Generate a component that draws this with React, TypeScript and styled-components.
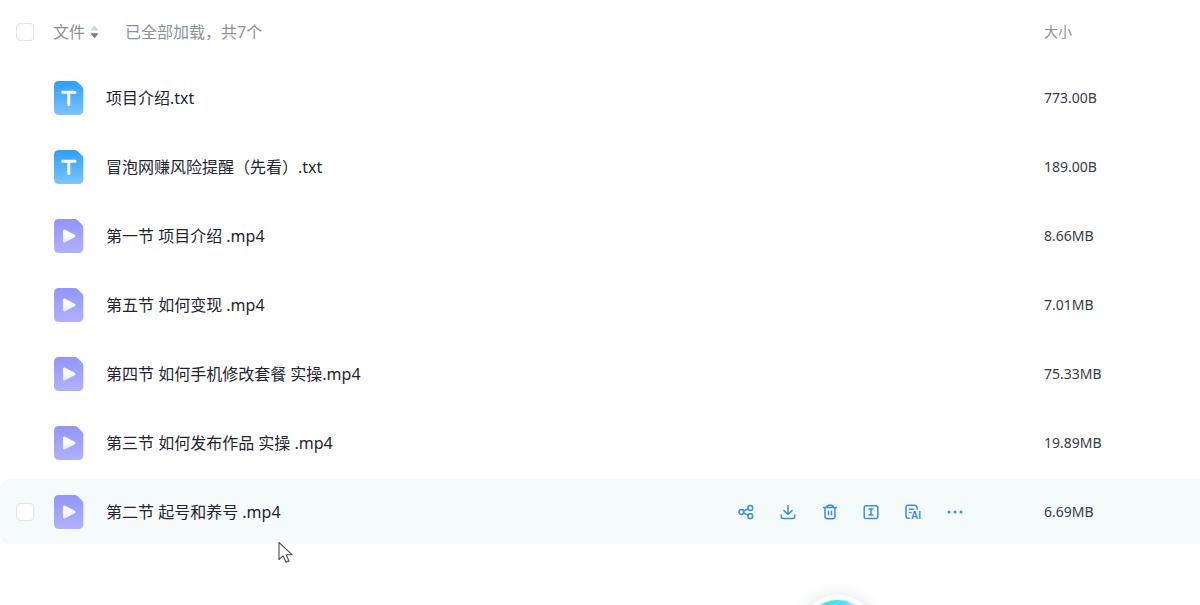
import React from 'react';
import styled, { createGlobalStyle } from 'styled-components';

const GlobalStyle = createGlobalStyle`
  * { box-sizing: border-box; }
  body {
    margin: 0;
    background: #fff;
    color: #1f2530;
    font-family: "Noto Sans", "Noto Sans CJK SC", sans-serif;
    font-size: 16px;
    line-height: 24px;
  }
`;

const Page = styled.main`
  position: relative;
  min-height: 100vh;
  overflow: hidden;
`;

const FileTable = styled.table`
  width: 100%;
  table-layout: fixed;
  border-collapse: separate;
  border-spacing: 0 4px;
`;

const CheckColumn = styled.col`
  width: 53px;
`;

const SizeColumn = styled.col`
  width: 156px;
`;

const HeaderRow = styled.tr`
  height: 57px;
  color: #8b919b;
`;

const HeaderCell = styled.th<{ $small?: boolean }>`
  padding: 0 0 2px;
  text-align: left;
  font-weight: 400;
  font-size: ${(p) => (p.$small ? '14px' : '16px')};
  vertical-align: middle;
`;

const HeaderGroup = styled.div`
  display: flex;
  align-items: center;
  gap: 26px;
`;

const SortButton = styled.button`
  display: flex;
  align-items: center;
  gap: 5px;
  padding: 0;
  border: 0;
  background: none;
  color: inherit;
  font: inherit;
  cursor: pointer;
`;

const Row = styled.tr<{ $active?: boolean }>`
  height: 65px;
  background: ${(p) => (p.$active ? '#f5fafb' : 'transparent')};
`;

const Cell = styled.td`
  padding: 0;
  vertical-align: middle;

  &:first-child {
    border-radius: 10px 0 0 10px;
  }
`;

const SizeCell = styled(Cell)`
  font-size: 14px;
  color: #353c48;
`;

const Checkbox = styled.input<{ $hidden?: boolean }>`
  appearance: none;
  display: block;
  width: 18px;
  height: 18px;
  margin: 0 0 0 16px;
  border: 1px solid #e0e3e8;
  border-radius: 4px;
  background: #fff;
  opacity: ${(p) => (p.$hidden ? 0 : 1)};
`;

const NameGroup = styled.div`
  display: flex;
  align-items: center;
  gap: 22px;
  padding-left: 1px;
`;

const FileName = styled.label`
  flex: 1;
`;

const Actions = styled.div`
  display: flex;
  justify-content: space-between;
  width: 225px;
  margin-right: 81px;
`;

const ActionButton = styled.button`
  display: flex;
  padding: 0;
  border: 0;
  background: none;
  color: #3b8ddf;
  cursor: pointer;
`;

const Pointer = styled.svg`
  position: absolute;
  left: 278px;
  top: 541px;
  pointer-events: none;
`;

const Assistant = styled.button`
  position: fixed;
  right: 323px;
  bottom: -68px;
  width: 78px;
  height: 78px;
  border: 5px solid #fff;
  border-radius: 50%;
  background: linear-gradient(100deg, #2fe6f5 30%, #62def8 52%, #d5f6fc 68%);
  box-shadow: 0 0 16px rgba(40, 70, 70, 0.14);
`;

function TextFileIcon() {
  return (
    <svg width="30" height="34" viewBox="0 0 30 34" aria-hidden="true">
      <defs>
        <linearGradient id="txt" x1="0" y1="0" x2="0" y2="1">
          <stop offset="0" stopColor="#2b9ffb" />
          <stop offset="1" stopColor="#7cc5fd" />
        </linearGradient>
      </defs>
      <path d="M5 0H20.500Q22.300 0 23.600 1.300L28 5.600Q29.300 6.900 29.300 8.700V29Q29.300 34 24.300 34H5Q0 34 0 29V5Q0 0 5 0Z" fill="url(#txt)" />
      <path d="M8.600 11.300H21M14.800 11.300V23.400" stroke="#fff" strokeWidth="3" strokeLinecap="round" fill="none" />
    </svg>
  );
}

function VideoFileIcon() {
  return (
    <svg width="30" height="34" viewBox="0 0 30 34" aria-hidden="true">
      <defs>
        <linearGradient id="vid" x1="0" y1="0" x2="0" y2="1">
          <stop offset="0" stopColor="#9395fa" />
          <stop offset="1" stopColor="#b0b1fd" />
        </linearGradient>
        <linearGradient id="play" x1="0" y1="0" x2="0" y2="1">
          <stop offset="0.300" stopColor="#fff" />
          <stop offset="1" stopColor="#ececff" />
        </linearGradient>
      </defs>
      <path d="M5 0H20.500Q22.300 0 23.600 1.300L28 5.600Q29.300 6.900 29.300 8.700V29Q29.300 34 24.300 34H5Q0 34 0 29V5Q0 0 5 0Z" fill="url(#vid)" />
      <path d="M10.400 12V22L19.900 17Z" fill="url(#play)" stroke="url(#play)" strokeWidth="3" strokeLinejoin="round" />
    </svg>
  );
}

function SortIcon() {
  return (
    <svg width="9" height="14" viewBox="0 0 9 14" aria-hidden="true">
      <path d="M4.500 1.500L7.500 5H1.500Z" fill="#d3d6dc" stroke="#d3d6dc" strokeWidth="1.200" strokeLinejoin="round" />
      <path d="M4.500 12.300L7.500 8.800H1.500Z" fill="#777f90" stroke="#777f90" strokeWidth="1.200" strokeLinejoin="round" />
    </svg>
  );
}

const ActionSvg = styled.svg.attrs({
  width: 16,
  height: 16,
  viewBox: '0 0 16 16',
  fill: 'none',
  stroke: 'currentColor',
  strokeWidth: 1.5,
  strokeLinecap: 'round',
  strokeLinejoin: 'round',
  'aria-hidden': true,
})`
  display: block;
  overflow: visible;
`;

const actions = [
  {
    label: '分享',
    icon: (
      <>
        <circle cx="3.400" cy="8" r="2.400" />
        <circle cx="12.300" cy="4" r="2.400" />
        <circle cx="12.300" cy="12.200" r="2.400" />
        <path d="M5.600 7L10.100 5M5.600 9L10.100 11.200" />
      </>
    ),
  },
  {
    label: '下载',
    icon: <path d="M8 1.500V10.300M4 6.600L8 10.500L12 6.600M1.300 11V12.500Q1.300 14.500 3.300 14.500H12.700Q14.700 14.500 14.700 12.500V11" />,
  },
  {
    label: '删除',
    icon: <path d="M1.500 3.600H14.500M4.600 3.400Q5 1.200 7 1.200H9Q11 1.200 11.400 3.400M3 3.800V12.500Q3 14.800 5.300 14.800H10.700Q13 14.800 13 12.500V3.800M6.500 7.300V10.800M9.500 7.300V10.800" />,
  },
  {
    label: '重命名',
    icon: (
      <>
        <rect x="1.200" y="1.700" width="13.600" height="12.800" rx="2" />
        <path d="M6 5H10M8 5V11M6 11H10" />
      </>
    ),
  },
  {
    label: '智能处理',
    icon: (
      <>
        <path d="M4.500 14.300H3.200Q1 14.300 1 12.100V3.400Q1 1.200 3.200 1.200H9Q12.200 1.200 12.200 4.400V5.200M4.400 5.200H8.400M4.400 8.600H6" />
        <text x="6" y="15" fontSize="10" fontWeight="700" fill="currentColor" stroke="none">AI</text>
      </>
    ),
  },
  {
    label: '更多',
    icon: (
      <g fill="currentColor" stroke="none">
        <circle cx="2" cy="8" r="1.500" />
        <circle cx="8" cy="8" r="1.500" />
        <circle cx="14" cy="8" r="1.500" />
      </g>
    ),
  },
];

const files = [
  { name: '项目介绍.txt', size: '773.00B' },
  { name: '冒泡网赚风险提醒（先看）.txt', size: '189.00B' },
  { name: '第一节 项目介绍 .mp4', size: '8.66MB' },
  { name: '第五节 如何变现 .mp4', size: '7.01MB' },
  { name: '第四节 如何手机修改套餐 实操.mp4', size: '75.33MB' },
  { name: '第三节 如何发布作品 实操 .mp4', size: '19.89MB' },
  { name: '第二节 起号和养号 .mp4', size: '6.69MB', active: true },
];

export default function App() {
  return (
    <Page>
      <GlobalStyle />
      <FileTable>
        <colgroup>
          <CheckColumn />
          <col />
          <SizeColumn />
        </colgroup>
        <thead>
          <HeaderRow>
            <HeaderCell>
              <Checkbox type="checkbox" aria-label="全选" />
            </HeaderCell>
            <HeaderCell>
              <HeaderGroup>
                <SortButton type="button">
                  文件
                  <SortIcon />
                </SortButton>
                <span>已全部加载，共7个</span>
              </HeaderGroup>
            </HeaderCell>
            <HeaderCell $small>大小</HeaderCell>
          </HeaderRow>
        </thead>
        <tbody>
          {files.map((file, i) => (
            <Row key={file.name} $active={file.active}>
              <Cell>
                <Checkbox type="checkbox" id={`file-${i}`} $hidden={!file.active} />
              </Cell>
              <Cell>
                <NameGroup>
                  {file.name.endsWith('.txt') ? <TextFileIcon /> : <VideoFileIcon />}
                  <FileName htmlFor={`file-${i}`}>{file.name}</FileName>
                  {file.active && (
                    <Actions>
                      {actions.map((action) => (
                        <ActionButton key={action.label} type="button" aria-label={action.label}>
                          <ActionSvg>{action.icon}</ActionSvg>
                        </ActionButton>
                      ))}
                    </Actions>
                  )}
                </NameGroup>
              </Cell>
              <SizeCell>{file.size}</SizeCell>
            </Row>
          ))}
        </tbody>
      </FileTable>
      <Pointer width="16" height="23" viewBox="0 0 16 23" aria-hidden="true">
        <path d="M1 1.500V18.500L5 14.800L8 21.300L11 20L8.200 13.700H14Z" fill="#fff" stroke="#4a4d52" strokeWidth="1.100" strokeLinejoin="round" />
      </Pointer>
      <Assistant type="button" aria-label="助手" />
    </Page>
  );
}
